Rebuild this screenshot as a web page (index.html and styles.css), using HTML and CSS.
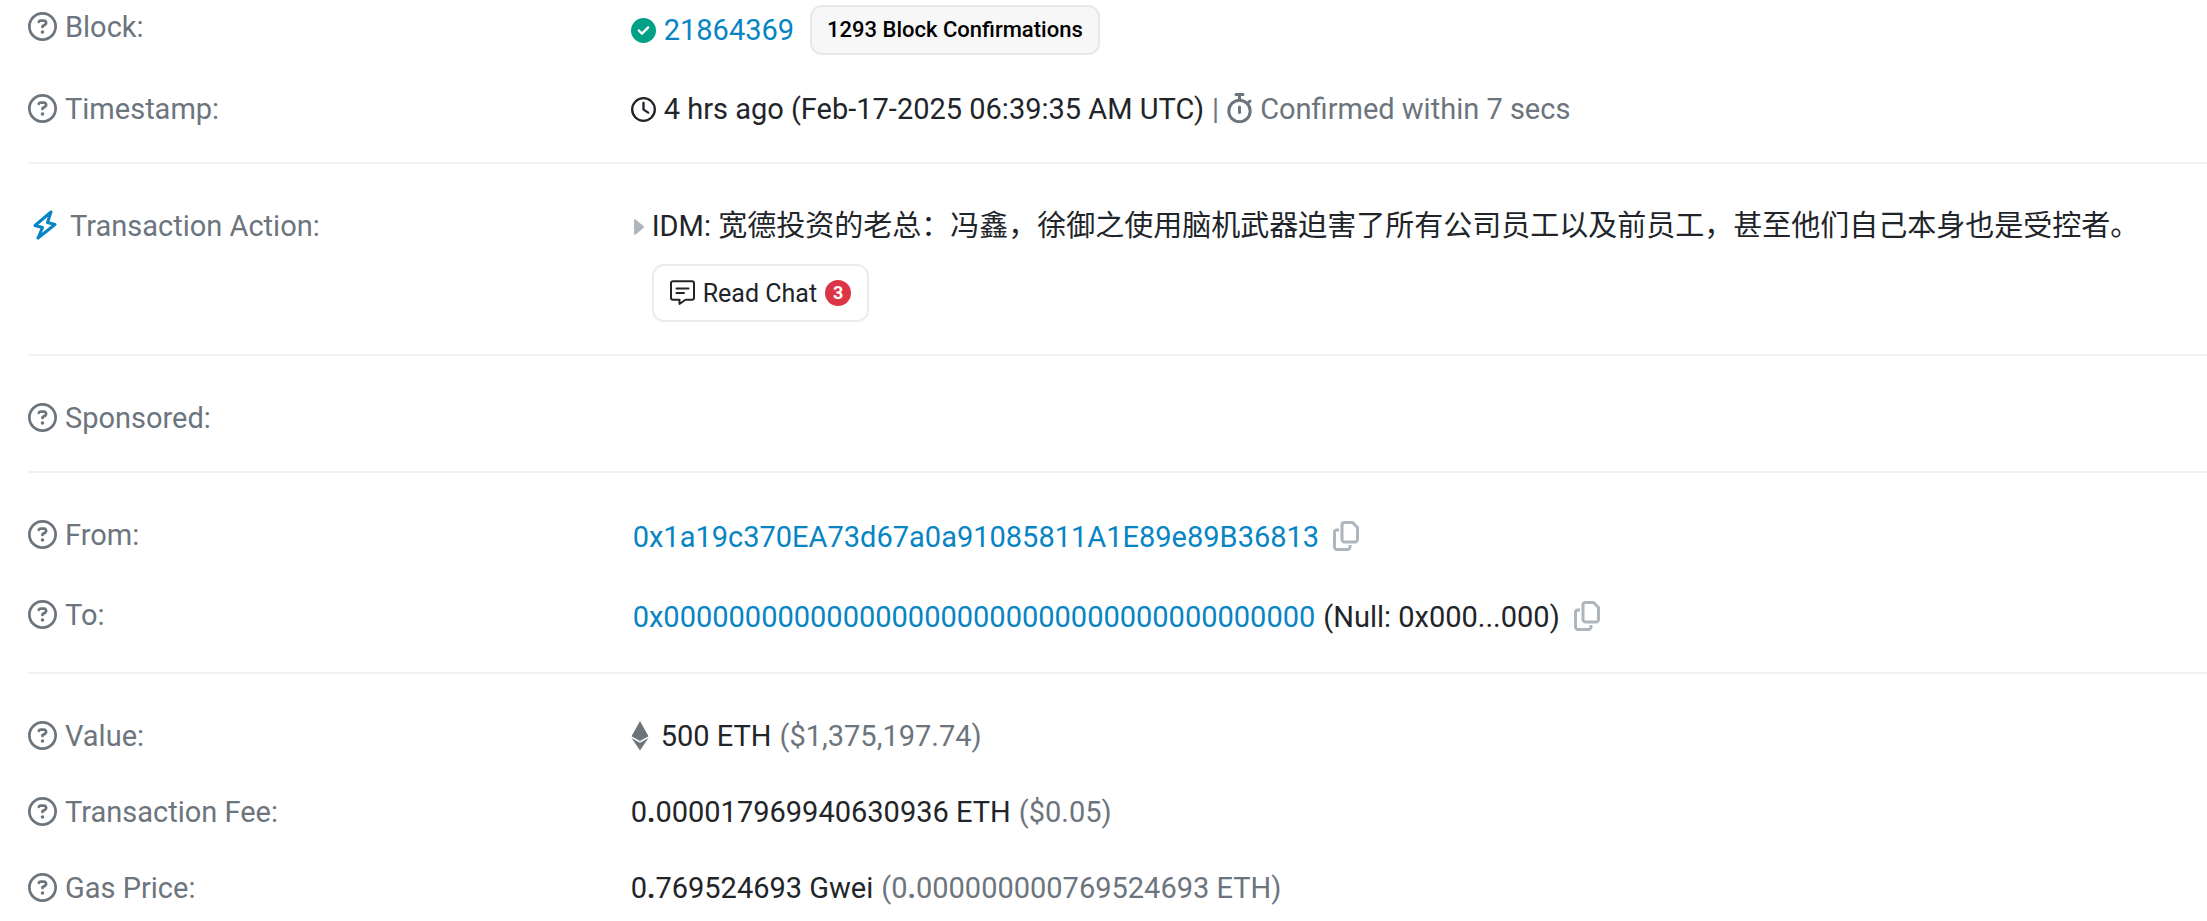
FILE: index.html
```html
<!DOCTYPE html>
<html lang="en">
<head>
  <meta charset="UTF-8" />
  <meta name="viewport" content="width=device-width, initial-scale=1.0"/>
  <title>Transaction Details</title>
  <link rel="stylesheet" href="styles.css">
</head>
<body>
  <!-- Shared icons -->
  <svg class="sprite" aria-hidden="true">
    <symbol id="i-question" viewBox="0 0 512 512">
      <path d="M464 256A208 208 0 1 0 48 256a208 208 0 1 0 416 0zM0 256a256 256 0 1 1 512 0A256 256 0 1 1 0 256zm169.8-90.7c7.9-22.3 29.1-37.3 52.8-37.3h58.3c34.9 0 63.1 28.3 63.1 63.1c0 22.6-12.1 43.5-31.7 54.8L280 264.4c-.2 13-10.9 23.6-24 23.6c-13.3 0-24-10.7-24-24V250.5c0-8.6 4.6-16.5 12.1-20.8l44.3-25.4c4.7-2.7 7.6-7.7 7.6-13.1c0-8.4-6.8-15.1-15.1-15.1H222.6c-3.4 0-6.4 2.1-7.5 5.3l-.4 1.2c-4.4 12.5-18.2 19-30.6 14.6s-19-18.2-14.6-30.6l.4-1.2zM224 352a32 32 0 1 1 64 0 32 32 0 1 1 -64 0z"/>
    </symbol>
    <symbol id="i-copy" viewBox="0 0 26 30">
      <path d="M11.5 1.5h8l5 5v12a2.500 2.500 0 0 1-2.500 2.500H11.500A2.500 2.500 0 0 1 9 18.500V4a2.500 2.500 0 0 1 2.500-2.500z M6 9H4a2.500 2.500 0 0 0-2.500 2.500V26A2.500 2.500 0 0 0 4 28.500h10.500A2.500 2.500 0 0 0 17 26v-2" fill="none" stroke="currentColor" stroke-width="3"/>
    </symbol>
  </svg>

  <dl class="details">
    <div class="group">
      <div class="row">
        <dt><svg class="icon-help"><use href="#i-question"/></svg>Block:</dt>
        <dd>
          <svg class="icon-status success" viewBox="0 0 512 512"><path d="M256 512A256 256 0 1 0 256 0a256 256 0 1 0 0 512zM369 209L241 337c-9.4 9.4-24.6 9.4-33.9 0l-64-64c-9.4-9.4-9.4-24.6 0-33.9s24.6-9.4 33.9 0l47 47L335 175c9.4-9.4 24.6-9.4 33.9 0s9.4 24.6 0 33.9z"/></svg>
          <a href="#">21864369</a>
          <span class="confirmations">1293 Block Confirmations</span>
        </dd>
      </div>
      <div class="row">
        <dt><svg class="icon-help"><use href="#i-question"/></svg>Timestamp:</dt>
        <dd>
          <svg class="icon-status" viewBox="0 0 512 512"><path d="M464 256A208 208 0 1 1 48 256a208 208 0 1 1 416 0zM0 256a256 256 0 1 0 512 0A256 256 0 1 0 0 256zM232 120V256c0 8 4 15.5 10.7 20l96 64c11 7.4 25.9 4.4 33.3-6.7s4.4-25.9-6.7-33.3L280 243.2V120c0-13.3-10.7-24-24-24s-24 10.7-24 24z"/></svg>
          <span>4 hrs ago (Feb-17-2025 06:39:35 AM UTC)</span>
          <span class="muted">|</span>
          <span class="muted confirmed">
            <svg class="icon-stopwatch outline" viewBox="0 0 25 30"><circle cx="12.5" cy="18" r="10.7"/><path d="M9 1.5h7M12.5 2v4M12.5 14v5.500M20.500 10.500l2.500-2.500"/></svg>
            Confirmed within 7 secs
          </span>
        </dd>
      </div>
    </div>

    <div class="group">
      <div class="row">
        <dt class="action-label"><svg class="icon-bolt outline" viewBox="0 0 24 30"><path d="M18 2L2 15.5l7.500 2L5 28 22 14.500l-7.500-2z"/></svg>Transaction Action:</dt>
        <dd class="action">
          <svg class="icon-caret" viewBox="0 0 10 16"><path d="M0 1.5v13c0 1.2 1.2 1.5 2 .8l7.400-6.300c.7-.6.7-1.400 0-2L2 .7C1.200 0 0 .3 0 1.500z"/></svg>
          <div class="message">
            <p>IDM: 宽德投资的老总：冯鑫，徐御之使用脑机武器迫害了所有公司员工以及前员工，甚至他们自己本身也是受控者。</p>
            <button type="button" class="btn-chat">
              <svg class="icon-chat outline" viewBox="0 0 25 26"><path d="M3 1.200h19a2 2 0 0 1 2 2v14.600a2 2 0 0 1-2 2h-6.500L9.500 24v-4.200H3a2 2 0 0 1-2-2V3.200a2 2 0 0 1 2-2z"/><path d="M6.500 8.500h12M6.500 13h7.500"/></svg>
              Read Chat
              <span class="count">3</span>
            </button>
          </div>
        </dd>
      </div>
    </div>

    <div class="group">
      <div class="row">
        <dt><svg class="icon-help"><use href="#i-question"/></svg>Sponsored:</dt>
        <dd></dd>
      </div>
    </div>

    <div class="group">
      <div class="row">
        <dt><svg class="icon-help"><use href="#i-question"/></svg>From:</dt>
        <dd class="address">
          <a href="#">0x1a19c370EA73d67a0a91085811A1E89e89B36813</a>
          <button type="button" class="btn-copy" aria-label="Copy address"><svg class="icon-copy"><use href="#i-copy"/></svg></button>
        </dd>
      </div>
      <div class="row">
        <dt><svg class="icon-help"><use href="#i-question"/></svg>To:</dt>
        <dd class="address">
          <a href="#">0x0000000000000000000000000000000000000000</a>
          <span>(Null: 0x000...000)</span>
          <button type="button" class="btn-copy" aria-label="Copy address"><svg class="icon-copy"><use href="#i-copy"/></svg></button>
        </dd>
      </div>
    </div>

    <div class="group">
      <div class="row">
        <dt><svg class="icon-help"><use href="#i-question"/></svg>Value:</dt>
        <dd>
          <svg class="icon-eth" viewBox="0 0 18 30"><path d="M9 0l8.500 15.200L9 20 .5 15.200z M.5 17L9 21.800 17.500 17 9 29.500z"/></svg>
          <span>500 ETH</span>
          <span class="muted">($1,375,197.74)</span>
        </dd>
      </div>
      <div class="row">
        <dt><svg class="icon-help"><use href="#i-question"/></svg>Transaction Fee:</dt>
        <dd>
          <span>0<b>.</b>000017969940630936 ETH</span>
          <span class="muted">($0.05)</span>
        </dd>
      </div>
      <div class="row">
        <dt><svg class="icon-help"><use href="#i-question"/></svg>Gas Price:</dt>
        <dd>
          <span>0<b>.</b>769524693 Gwei</span>
          <span class="muted">(0<b>.</b>000000000769524693 ETH)</span>
        </dd>
      </div>
    </div>
  </dl>
</body>
</html>
```
FILE: styles.css
```css
* {
  margin: 0; padding: 0; box-sizing: border-box;
}
body {
  font-family: Roboto, "Noto Sans CJK SC", sans-serif;
  font-size: 29px;
  line-height: 44px;
  color: #212529;
  background-color: #fff;
}
svg {
  fill: currentColor;
  flex-shrink: 0;
}
.sprite {
  position: absolute;
  width: 0;
  height: 0;
}
a {
  color: #0784c3;
  text-decoration: none;
}
.muted {
  color: #6c757d;
}

.details {
  padding: 5px 0 0 28px;
}
.group {
  display: flex;
  flex-direction: column;
  gap: 32px;
}
.group + .group {
  margin-top: 31px;
  padding-top: 40px;
  border-top: 2px solid #f0f1f2;
}
.row {
  display: grid;
  grid-template-columns: 13fr 34fr;
  align-items: start;
}
dt, dd {
  display: flex;
  align-items: center;
  gap: 8px;
}
dt {
  color: #6c757d;
}
dd {
  min-height: 44px;
}
.action-label {
  gap: 13px;
  padding-left: 5px;
}

/* Icons */
.outline {
  fill: none;
  stroke: currentColor;
  stroke-width: 3;
  stroke-linecap: round;
  stroke-linejoin: round;
}
.icon-help {
  width: 29px;
  height: 29px;
  margin-bottom: 2px;
}
.icon-status {
  width: 25px;
  height: 25px;
}
.success {
  color: #00a186;
}
.icon-stopwatch {
  width: 25px;
  height: 30px;
  margin-bottom: 2px;
}
.icon-bolt {
  width: 24px;
  height: 30px;
  margin-bottom: 2px;
  color: #0784c3;
}
.icon-caret {
  width: 10px;
  height: 16px;
  margin: 15px 0 0 3px;
  color: #adb5bd;
}
.icon-chat {
  width: 25px;
  height: 26px;
  stroke-width: 2;
}
.icon-copy {
  display: block;
  width: 26px;
  height: 30px;
}
.icon-eth {
  width: 18px;
  height: 30px;
  margin-right: 4px;
  color: #6c757d;
}

.confirmations {
  height: 50px;
  margin-left: 8px;
  padding: 0 15px;
  border: 2px solid #e6e8ec;
  border-radius: 12px;
  background-color: #f7f7f7;
  color: #000;
  font-size: 22px;
  font-weight: 500;
  line-height: 46px;
}
.confirmed {
  display: flex;
  align-items: center;
  gap: 8px;
}
.action {
  align-items: flex-start;
}
.btn-chat {
  display: flex;
  align-items: center;
  gap: 8px;
  height: 58px;
  margin: 16px 0 1px;
  padding: 0 16px;
  border: 2px solid #e9ecef;
  border-radius: 12px;
  background-color: #fff;
  color: #212529;
  font-family: inherit;
  font-size: 25px;
  cursor: pointer;
}
.count {
  width: 26px;
  height: 26px;
  border-radius: 50%;
  background-color: #dc3545;
  color: #fff;
  font-size: 18px;
  font-weight: 700;
  line-height: 26px;
  text-align: center;
}
.address {
  min-height: 48px;
  padding-left: 2px;
}
.btn-copy {
  margin: 0 0 2px 6px;
  border: none;
  background: none;
  color: #adb5bd;
  cursor: pointer;
}
```
